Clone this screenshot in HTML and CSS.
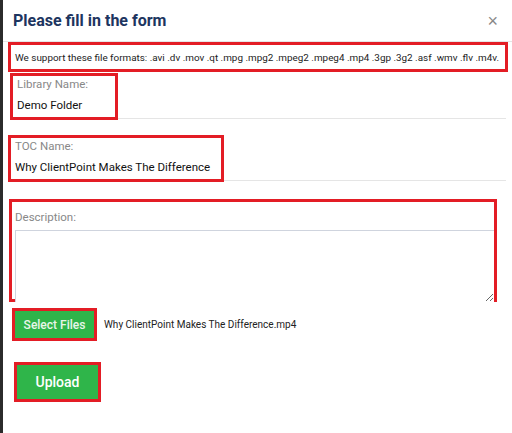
FILE: index.html
```html
<!DOCTYPE html>
<html lang="en">
  <head>
    <meta charset="UTF-8" />
    <meta name="viewport" content="width=device-width, initial-scale=1.0" />
    <title>Upload Form</title>
    <link rel="stylesheet" href="styles.css">
  </head>
  <body>
    <div class="modal">
      <div class="modal-header">
        <h1>Please fill in the form</h1>
        <button class="close" type="button">&times;</button>
      </div>

      <div class="mark formats">
        We support these file formats: .avi .dv .mov .qt .mpg .mpg2 .mpeg2 .mpeg4 .mp4 .3gp .3g2 .asf .wmv .flv .m4v.
      </div>

      <div class="field field-library">
        <div class="mark">
          <label>Library Name:</label>
          <div class="value">Demo Folder</div>
        </div>
      </div>

      <div class="field field-toc">
        <div class="mark">
          <label>TOC Name:</label>
          <div class="value">Why ClientPoint Makes The Difference</div>
        </div>
      </div>

      <div class="mark description">
        <label>Description:</label>
        <textarea></textarea>
      </div>

      <div class="files">
        <div class="mark">
          <button class="btn btn-small" type="button">Select Files</button>
        </div>
        <span class="filename">Why ClientPoint Makes The Difference.mp4</span>
      </div>

      <div class="upload-row">
        <div class="mark">
          <button class="btn btn-large" type="button">Upload</button>
        </div>
      </div>
    </div>
  </body>
</html>
```

FILE: styles.css
```css
html,
body {
  margin: 0;
  height: 100%;
}
body {
  font-family: Roboto, "Liberation Sans", sans-serif;
  background-color: #fff;
  border-left: 3px solid #2b2b2b;
  box-sizing: border-box;
}
.modal {
  width: 509px;
}
.modal-header {
  display: flex;
  align-items: center;
  justify-content: space-between;
  height: 42px;
  padding: 0 14px 0 10px;
  border-bottom: 1px solid #e5e5e5;
  box-sizing: border-box;
}
h1 {
  margin: 0;
  font-size: 16px;
  font-weight: bold;
  color: #1d3560;
}
.close {
  border: none;
  background: none;
  padding: 0;
  font-size: 18px;
  line-height: 1;
  color: #888;
  cursor: pointer;
}
.mark {
  border: 3px solid #e31d25;
}
.formats {
  margin: 0 4px 0 5px;
  height: 30px;
  box-sizing: border-box;
  padding: 0 4px;
  display: flex;
  align-items: center;
  font-size: 9.9px;
  color: #222;
  white-space: nowrap;
  overflow: hidden;
}
.field {
  display: flex;
  margin: 0 6px 0 10px;
  border-bottom: 1px solid #e5e5e5;
}
.field .mark {
  box-sizing: border-box;
  height: 47px;
  padding: 0 4px;
  margin-bottom: -2px;
  white-space: nowrap;
}
.field-library {
  margin-left: 7px;
  margin-top: 1px;
}
.field-library .mark {
  width: 108px;
}
.field-toc {
  margin-top: 16px;
  margin-left: 5px;
}
.field-toc .mark {
  width: 216px;
}
label {
  display: block;
  font-size: 11.5px;
  color: #888;
  line-height: 14px;
  padding-top: 1px;
}
.value {
  font-size: 11.5px;
  color: #111;
  line-height: 14px;
  margin-top: 7px;
}
.description {
  margin: 18px 15px 0 6px;
  height: 103px;
  box-sizing: border-box;
  padding: 5px 0 0 3px;
}
.description label {
  padding-top: 3px;
}
.description textarea {
  display: block;
  box-sizing: border-box;
  width: 100%;
  height: 72px;
  margin-top: 6px;
  border: 1px solid #cfd4de;
  border-right: none;
  border-bottom: none;
  font-family: inherit;
}
.files {
  display: flex;
  align-items: center;
  margin: 6px 0 0 9px;
}
.filename {
  margin-left: 7px;
  font-size: 10px;
  color: #222;
}
.btn {
  display: block;
  border: none;
  background-color: #2fb54a;
  color: #fff;
  font-family: inherit;
  font-weight: 500;
  cursor: pointer;
}
.btn-small {
  width: 79px;
  height: 27px;
  font-size: 12px;
  color: #e8f5e9;
}
.upload-row {
  display: flex;
  margin: 21px 0 0 11px;
}
.btn-large {
  width: 81px;
  height: 34px;
  font-size: 14px;
}
```
